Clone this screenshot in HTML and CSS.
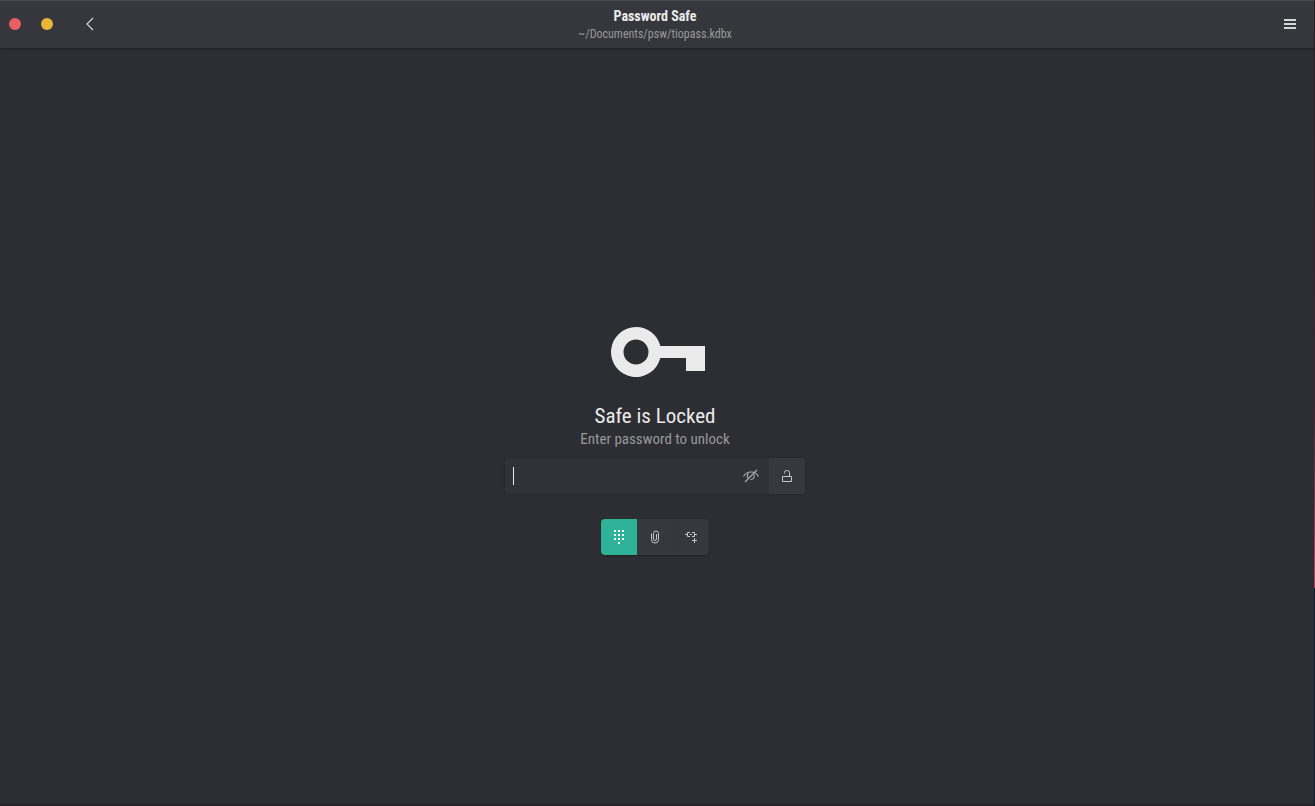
FILE: index.html
```html
<!DOCTYPE html>
<html lang="en">

<head>
  <meta charset="UTF-8" />
  <meta name="viewport" content="width=device-width, initial-scale=1.0" />
  <title>Password Safe</title>
  <link rel="stylesheet" href="styles.css">
</head>

<body>
  <div class="window">

    <!-- Header bar -->
    <header class="headerbar">
      <div class="header-start">
        <button class="dot dot-close" aria-label="Close"></button>
        <button class="dot dot-minimize" aria-label="Minimize"></button>
        <button class="icon-btn back-btn" aria-label="Back">
          <svg width="16" height="16" viewBox="0 0 16 16"><path d="M11 2 L5 8 L11 14" fill="none" stroke="currentColor" stroke-width="1.2" /></svg>
        </button>
      </div>
      <div class="header-title">
        <h1>Password Safe</h1>
        <p>~/Documents/psw/tiopass.kdbx</p>
      </div>
      <div class="header-end">
        <button class="icon-btn" aria-label="Menu">
          <svg width="16" height="16" viewBox="0 0 16 16"><path d="M2 3h12v2H2zM2 7h12v2H2zM2 11h12v2H2z" fill="currentColor" /></svg>
        </button>
      </div>
    </header>

    <!-- Unlock screen -->
    <main class="unlock">
      <svg class="key" width="102" height="52" viewBox="-6 0 102 52">
        <path fill="#ebebeb" fill-rule="evenodd" d="M26 1a25 25 0 0 1 24.300 19H95v25H76V32H50.300A25 25 0 1 1 26 1zM26 13.500a12.500 12.500 0 1 0 0 25a12.500 12.500 0 1 0 0-25z" />
      </svg>
      <h2>Safe is Locked</h2>
      <label class="hint" for="password">Enter password to unlock</label>

      <form class="entry-row">
        <div class="entry">
          <span class="caret"></span>
          <input type="password" id="password" autocomplete="off" />
          <button type="button" class="reveal" aria-label="Show password">
            <svg width="16" height="16" viewBox="0 0 16 16" fill="none" stroke="currentColor">
              <path d="M0.500 8.500C3.500 2.500 12.500 2.500 15.500 8.500" stroke-width="1.200" />
              <path d="M5.500 5.500A3.500 3.500 0 0 0 5 10M11 6.500A3.500 3.500 0 0 1 7.500 11.500" stroke-width="1.200" />
              <path d="M2 14L14 2M6.500 9.500L9.500 6.500" stroke-width="1.200" />
            </svg>
          </button>
        </div>
        <button type="button" class="unlock-btn" aria-label="Unlock">
          <svg width="16" height="16" viewBox="0 0 16 16" fill="none" stroke="currentColor">
            <path d="M3.500 8.500h9v5h-9zM10.500 8.500V4.500a2 2 0 0 0-2-2h-1a2 2 0 0 0-2 2v1" />
          </svg>
        </button>
      </form>

      <div class="methods">
        <button class="method active" aria-label="Password">
          <svg width="16" height="16" viewBox="0 0 16 16" fill="currentColor">
            <path d="M3 1h2v2H3zM7 1h2v2H7zM11 1h2v2h-2zM3 5h2v2H3zM7 5h2v2H7zM11 5h2v2h-2zM3 9h2v2H3zM7 9h2v2H7zM11 9h2v2h-2zM7 13h2v2H7z" />
          </svg>
        </button>
        <button class="method" aria-label="Keyfile">
          <svg width="16" height="16" viewBox="0 0 16 16" fill="none" stroke="currentColor">
            <path d="M4.500 4.500v6a3.500 3.500 0 0 0 7 0v-6a2.500 2.500 0 0 0-5 0v5.500a1.500 1.500 0 0 0 3 0v-5" />
          </svg>
        </button>
        <button class="method" aria-label="Password and keyfile">
          <svg width="16" height="16" viewBox="0 0 16 16" fill="none" stroke="currentColor">
            <path d="M7 3.500H4.500v4H7M2 5.500h2.500M9 3.500h2.500v4H9M11.500 5.500H14M7 5.500h2M11.500 9v5M9 11.500h5" />
          </svg>
        </button>
      </div>
    </main>

  </div>
</body>

</html>
```
FILE: styles.css
```css
:root {
  --bg: #2d2e33;
  --header: #37383d;
  --header-end: #35363b;
  --control: #35393d;
  --entry: #313237;
  --fg: #ebebeb;
  --dim: #98999b;
  --accent: #2eb398;
}

* {
  box-sizing: border-box;
}

body {
  margin: 0;
  font-family: "Ubuntu Condensed", "Roboto Condensed", "Liberation Sans Narrow", "Open Sans Condensed", "Liberation Sans", sans-serif;
  background: linear-gradient(#2a1f27, #3d2533 50%, #b83c62 72%, #b83c62 73%, #101c2c 73%);
  color: var(--fg);
}

h1,
h2,
p {
  margin: 0;
  font-weight: normal;
}

button {
  display: flex;
  align-items: center;
  justify-content: center;
  padding: 0;
  border: none;
  background: none;
  color: inherit;
}

svg {
  display: block;
}

.window {
  display: flex;
  flex-direction: column;
  min-height: 100vh;
  margin-right: 1px;
  background: var(--bg);
  border-bottom: 2px solid #2a2329;
}

/* Header bar */
.headerbar {
  display: grid;
  grid-template-columns: 1fr auto 1fr;
  align-items: center;
  height: 49px;
  padding: 0 12px 2px 8px;
  background: linear-gradient(var(--header), var(--header-end));
  border-top: 1px solid #4b4c50;
  border-bottom: 1px solid #242529;
  box-shadow: 0 1px 2px rgba(0, 0, 0, 0.2);
}

.header-start {
  display: flex;
  align-items: center;
}

.header-end {
  display: flex;
  justify-content: flex-end;
}

.dot {
  width: 12px;
  height: 12px;
  margin: 0 19px 0 1px;
  border-radius: 50%;
}

.dot-close {
  background: #e75e64;
}

.dot-minimize {
  background: #e9b735;
}

.icon-btn {
  width: 24px;
  height: 24px;
  color: #d3d5d6;
}

.back-btn {
  margin-left: 6px;
}

.header-title {
  text-align: center;
}

.header-title h1 {
  font-size: 14px;
  font-weight: bold;
  line-height: 20px;
}

.header-title p {
  font-size: 12px;
  line-height: 16px;
  color: var(--dim);
}

/* Unlock screen */
.unlock {
  flex: 1;
  display: flex;
  flex-direction: column;
  align-items: center;
  justify-content: center;
  padding: 28px 4px 0 0;
}

.key {
  margin-bottom: 24px;
}

.unlock h2 {
  font-size: 21px;
  line-height: 28px;
}

.hint {
  font-size: 15px;
  line-height: 18px;
  color: var(--dim);
}

.entry-row {
  display: flex;
  width: 300px;
  height: 36px;
  margin: 10px 0 25px;
  border-radius: 4px;
  box-shadow: 0 0 3px rgba(0, 0, 0, 0.2);
}

.entry {
  flex: 1;
  display: flex;
  align-items: center;
  padding: 0 9px 0 8px;
  background: var(--entry);
  border-radius: 4px 0 0 4px;
}

.caret {
  width: 1px;
  height: 18px;
  background: var(--fg);
}

.entry input {
  flex: 1;
  min-width: 0;
  height: 100%;
  padding: 0;
  border: none;
  outline: none;
  background: transparent;
  color: var(--fg);
  font: inherit;
}

.reveal {
  color: #abadaf;
}

.unlock-btn {
  width: 37px;
  background: var(--control);
  border-left: 1px solid #2f3236;
  border-radius: 0 4px 4px 0;
  color: #c5c7c8;
}

.methods {
  display: flex;
  border-radius: 4px;
  overflow: hidden;
  box-shadow: 0 1px 2px rgba(0, 0, 0, 0.3);
}

.method {
  width: 36px;
  height: 36px;
  background: var(--control);
  color: #c5c7c8;
}

.method + .method {
  box-shadow: inset -1px 0 #323539;
}

.method.active {
  background: var(--accent);
  color: #fff;
}
```
